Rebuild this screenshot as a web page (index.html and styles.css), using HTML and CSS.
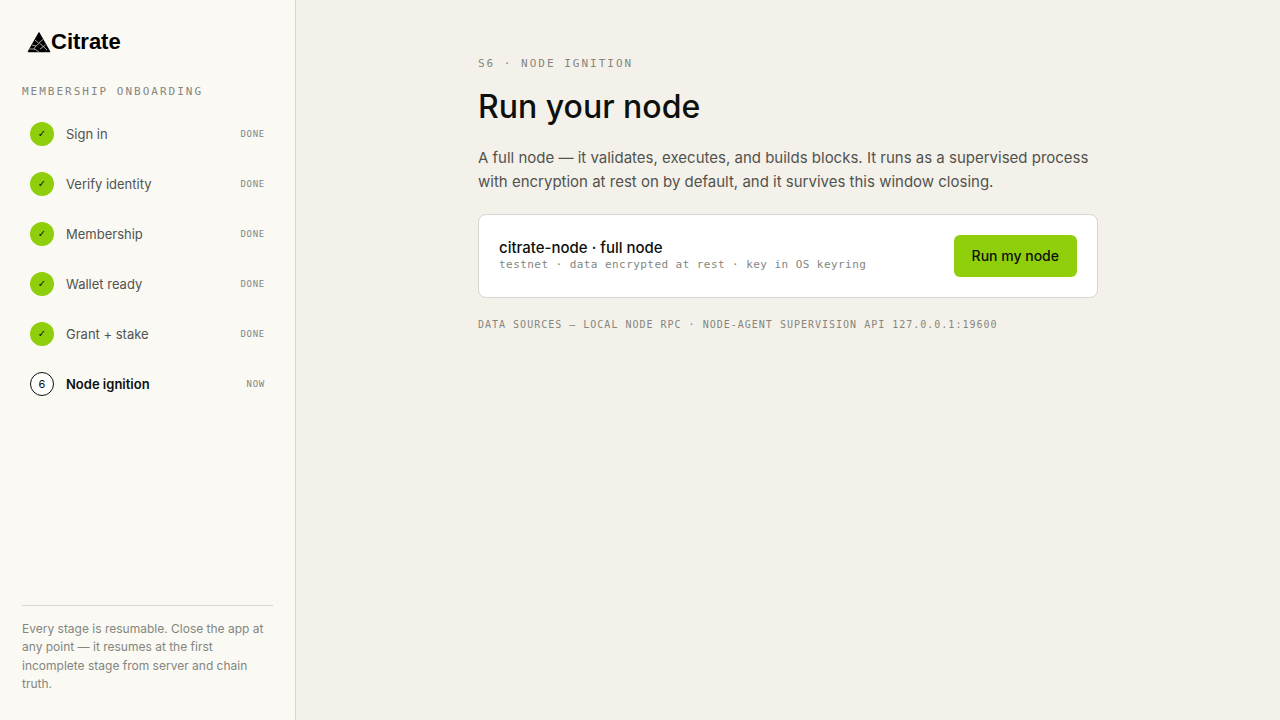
FILE: index.html
```html
<!DOCTYPE html>
<html lang="en">
<head>
<meta charset="utf-8">
<meta name="viewport" content="width=device-width, initial-scale=1">
<title>Citrate – Node ignition</title>
<link rel="stylesheet" href="styles.css">
</head>
<body>
<div class="app">
  <aside class="sidebar">
    <div class="brand">
      <svg class="brand-mark" viewBox="0 0 24 21" aria-hidden="true">
        <path d="M12 1 L22.500 19.500 H1.500 Z" fill="#000" stroke="#000" stroke-width="1.500" stroke-linejoin="round"/>
        <path d="M8 8 L11.500 11 L16 7.500 M5 13 L9 14 L12.500 11 L20 18 M9 14 L7 16.500 L12 20 M2.500 17 H8 M13 17 L18.500 13" fill="none" stroke="#c9c9c4" stroke-width=".8"/>
      </svg>
      <span class="brand-name">Citrate</span>
    </div>
    <h2 class="label">Membership onboarding</h2>
    <ol class="steps">
      <li class="step"><span class="dot">✓</span><span class="step-name">Sign in</span><span class="status">Done</span></li>
      <li class="step"><span class="dot">✓</span><span class="step-name">Verify identity</span><span class="status">Done</span></li>
      <li class="step"><span class="dot">✓</span><span class="step-name">Membership</span><span class="status">Done</span></li>
      <li class="step"><span class="dot">✓</span><span class="step-name">Wallet ready</span><span class="status">Done</span></li>
      <li class="step"><span class="dot">✓</span><span class="step-name">Grant + stake</span><span class="status">Done</span></li>
      <li class="step current" aria-current="step"><span class="dot">6</span><span class="step-name">Node ignition</span><span class="status">Now</span></li>
    </ol>
    <p class="note">Every stage is resumable. Close the app at any point — it resumes at the first incomplete stage from server and chain truth.</p>
  </aside>
  <main class="main">
    <div class="content">
      <p class="label">S6 · Node ignition</p>
      <h1 class="title">Run your node</h1>
      <p class="lead">A full node — it validates, executes, and builds blocks. It runs as a supervised process with encryption at rest on by default, and it survives this window closing.</p>
      <section class="card">
        <div class="card-text">
          <h2 class="card-title">citrate-node · full node</h2>
          <p class="card-meta">testnet · data encrypted at rest · key in OS keyring</p>
        </div>
        <button class="run" type="button">Run my node</button>
      </section>
      <p class="sources">Data sources — local node RPC · node-agent supervision API 127.0.0.1:19600</p>
    </div>
  </main>
</div>
</body>
</html>
```
FILE: styles.css
```css
* { box-sizing: border-box; }
body, h1, h2, p, ol { margin: 0; padding: 0; }
body {
  background: #f4f1ea;
  color: #0e100d;
  font-family: Inter, "Liberation Sans", sans-serif;
}
.app { display: flex; min-height: 100vh; }
.sidebar {
  display: flex;
  flex-direction: column;
  flex: 0 0 296px;
  padding: 28px 22px 26px;
  background: #faf9f4;
  border-right: 1px solid #d6d7d2;
}
.brand { display: flex; align-items: center; height: 28px; padding-left: 5px; }
.brand-mark { width: 24px; height: 21px; }
.brand-name {
  color: #000;
  font: 700 22px/28px "Liberation Sans", sans-serif;
}
.label {
  font: 400 11px/16px "DejaVu Sans Mono", monospace;
  letter-spacing: 2px;
  text-transform: uppercase;
  color: #84867e;
}
.sidebar .label { margin-top: 28px; }
.steps { display: flex; flex-direction: column; gap: 6px; margin-top: 12px; list-style: none; }
.step { display: flex; align-items: center; gap: 12px; min-height: 44px; padding: 0 8px; font-size: 13px; color: #51534e; }
.dot {
  display: grid;
  place-items: center;
  width: 24px;
  height: 24px;
  border-radius: 50%;
  background: #8fce0a;
  color: #0e100d;
  font: 400 10px/16px "DejaVu Sans", sans-serif;
}
.step-name { flex: 1; }
.status {
  font: 400 9px/12px "DejaVu Sans Mono", monospace;
  letter-spacing: 0.08em;
  text-transform: uppercase;
  color: #84867e;
}
.current { color: #0e100d; font-weight: 600; }
.current .dot { border: 1px solid #0e100d; background: #fff; font: 400 11px/16px Inter, sans-serif; }
.note {
  margin-top: auto;
  padding-top: 14px;
  border-top: 1px solid #d6d7d2;
  font-size: 12px;
  line-height: 1.55;
  color: #84867e;
}
.main { flex: 1; padding: 56px 40px; }
.content { max-width: 620px; margin: 0 auto; }
.title { margin-top: 16px; font-size: 32px; font-weight: 500; line-height: 38px; }
.lead { margin-top: 20px; font-size: 15px; line-height: 24px; color: #51534e; }
.card {
  display: flex;
  align-items: center;
  justify-content: space-between;
  gap: 20px;
  margin-top: 20px;
  padding: 20px;
  border: 1px solid #d6d7d2;
  border-radius: 8px;
  background: #fff;
}
.card-title { font-size: 15px; font-weight: 500; line-height: 18px; }
.card-meta { font: 400 11px/16px "DejaVu Sans Mono", monospace; letter-spacing: 0.04em; color: #84867e; }
.run {
  height: 42px;
  padding: 0 18px;
  border: 0;
  border-radius: 6px;
  background: #8fce0a;
  color: #0e100d;
  font: 500 14px/20px Inter, "Liberation Sans", sans-serif;
}
.sources {
  margin-top: 20px;
  font: 400 10px/14px "DejaVu Sans Mono", monospace;
  letter-spacing: 1px;
  text-transform: uppercase;
  color: #84867e;
}
```
